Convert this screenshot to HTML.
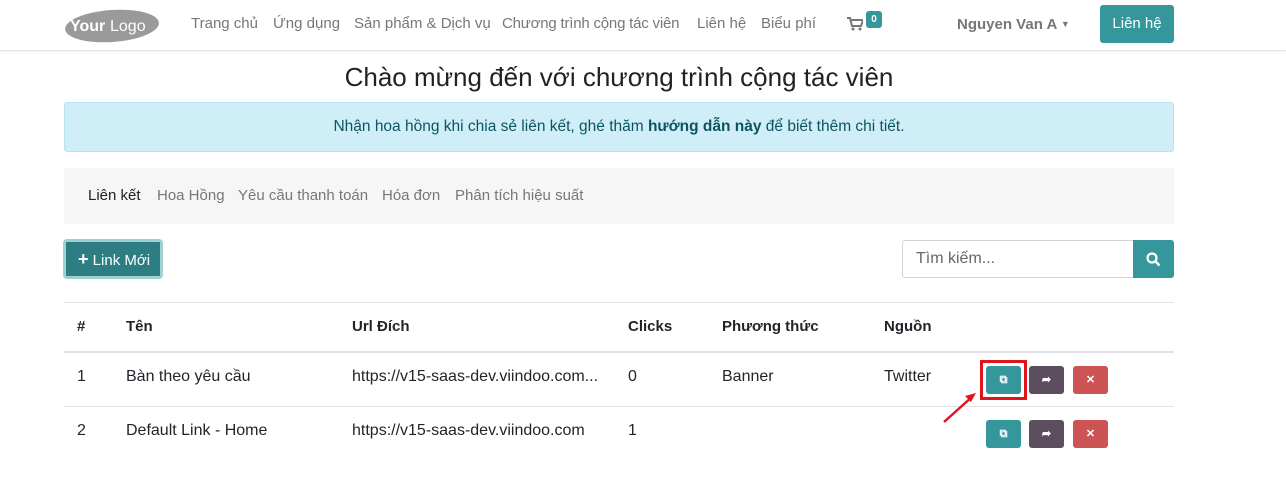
<!DOCTYPE html>
<html><head><meta charset="utf-8"><style>
*{box-sizing:border-box;margin:0;padding:0}
body{width:1286px;height:502px;background:#fff;font-family:"Liberation Sans",sans-serif;color:#212529;position:relative;overflow:hidden}
.a{position:absolute;white-space:nowrap}
.hdr{position:absolute;left:0;top:0;width:1286px;height:51px;border-bottom:1px solid #e5e5e5;box-shadow:0 1px 3px rgba(0,0,0,.06)}
.nav{color:#777;font-size:15px;top:15px}
.btn{position:absolute;width:35px;height:28px;border-radius:3px;color:#fff;font-size:11px;text-align:center;line-height:28px;font-weight:bold}
.t{background:#35979c}.p{background:#5d4e5f}.r{background:#cd5454}
.line{position:absolute;left:64px;width:1110px;height:1px;background:#dee2e6}
.th{font-weight:bold;font-size:15px;top:318px}
.td{font-size:16px}
</style></head><body>
<div class="hdr"></div>
<svg class="a" style="left:64px;top:8px" width="96" height="36"><ellipse cx="48" cy="18" rx="47" ry="16" fill="#9a9a9a" transform="rotate(-4 48 18)"/><text x="6" y="23" font-family="Liberation Sans" font-weight="bold" font-size="16" fill="#fff">Your</text><text x="46" y="23" font-family="Liberation Sans" font-size="16" fill="#fff">Logo</text></svg>
<div class="a nav" style="left:191px">Trang chủ</div>
<div class="a nav" style="left:273px">Ứng dụng</div>
<div class="a nav" style="left:354px">Sản phẩm &amp; Dịch vụ</div>
<div class="a nav" style="left:502px;letter-spacing:-0.2px">Chương trình cộng tác viên</div>
<div class="a nav" style="left:697px">Liên hệ</div>
<div class="a nav" style="left:761px">Biểu phí</div>
<svg class="a" style="left:847px;top:17px" width="16" height="14"><path d="M0 1h3l2 8h9l2-6H4" fill="none" stroke="#777" stroke-width="2"/><circle cx="6" cy="12" r="1.5" fill="#777"/><circle cx="13" cy="12" r="1.5" fill="#777"/></svg>
<div class="a" style="left:866px;top:11px;width:16px;height:17px;background:#35979c;border-radius:3px;color:#fff;font-size:10px;font-weight:bold;text-align:center;line-height:17px">0</div>
<div class="a" style="left:957px;top:16px;font-size:15px;font-weight:bold;color:#777">Nguyen Van A <span style="font-size:9px;position:relative;top:-2px">▼</span></div>
<div class="a" style="left:1100px;top:5px;width:74px;height:38px;background:#35979c;border-radius:3px;color:#fff;font-size:15px;text-align:center;line-height:38px">Liên hệ</div>
<div class="a" style="left:64px;width:1110px;text-align:center;top:62px;font-size:26px;color:#222">Chào mừng đến với chương trình cộng tác viên</div>
<div class="a" style="left:64px;top:102px;width:1110px;height:50px;background:#cfeef8;border:1px solid #b8e3f2;border-radius:3px;color:#0c5460;font-size:15.5px;text-align:center;line-height:48px">Nhận hoa hồng khi chia sẻ liên kết, ghé thăm <b>hướng dẫn này</b> để biết thêm chi tiết.</div>
<div class="a" style="left:64px;top:168px;width:1110px;height:56px;background:#f6f6f6"></div>
<div class="a" style="left:88px;top:187px;font-size:15px;color:#222">Liên kết</div>
<div class="a" style="left:157px;top:187px;font-size:15px;color:#777">Hoa Hồng</div>
<div class="a" style="left:238px;top:187px;font-size:15px;color:#777">Yêu cầu thanh toán</div>
<div class="a" style="left:382px;top:187px;font-size:15px;color:#777">Hóa đơn</div>
<div class="a" style="left:455px;top:187px;font-size:15px;color:#777">Phân tích hiệu suất</div>
<div class="a" style="left:63px;top:239px;width:100px;height:40px;background:#2c7e82;border:3px solid #9fd1d3;border-radius:4px;color:#fff;font-size:15px;line-height:34px;padding-left:12px"><b style="font-size:18px">+</b> Link Mới</div>
<div class="a" style="left:902px;top:240px;width:232px;height:38px;border:1px solid #ced4da;border-radius:3px 0 0 3px;font-size:16px;color:#666;line-height:36px;padding-left:13px">Tìm kiếm...</div>
<div class="a" style="left:1133px;top:240px;width:41px;height:38px;background:#35979c;border-radius:0 3px 3px 0"><svg style="position:absolute;left:13px;top:12px" width="15" height="15"><circle cx="6" cy="6" r="4.5" fill="none" stroke="#fff" stroke-width="2.2"/><path d="M9.5 9.5l4 4" stroke="#fff" stroke-width="2.5"/></svg></div>
<div class="line" style="top:302px"></div>
<div class="line" style="top:351px;height:2px"></div>
<div class="line" style="top:406px"></div>
<div class="a th" style="left:77px">#</div>
<div class="a th" style="left:126px">Tên</div>
<div class="a th" style="left:352px">Url Đích</div>
<div class="a th" style="left:628px">Clicks</div>
<div class="a th" style="left:722px">Phương thức</div>
<div class="a th" style="left:884px">Nguồn</div>
<div class="a td" style="left:77px;top:368px">1</div>
<div class="a td" style="left:126px;top:368px">Bàn theo yêu cầu</div>
<div class="a td" style="left:352px;top:368px">https://v15-saas-dev.viindoo.com...</div>
<div class="a td" style="left:628px;top:368px">0</div>
<div class="a td" style="left:722px;top:368px">Banner</div>
<div class="a td" style="left:884px;top:368px">Twitter</div>
<div class="a td" style="left:77px;top:422px">2</div>
<div class="a td" style="left:126px;top:422px">Default Link - Home</div>
<div class="a td" style="left:352px;top:422px">https://v15-saas-dev.viindoo.com</div>
<div class="a td" style="left:628px;top:422px">1</div>
<div class="btn t" style="left:986px;top:366px">⧉</div>
<div class="btn p" style="left:1029px;top:366px">➦</div>
<div class="btn r" style="left:1073px;top:366px">✕</div>
<div class="btn t" style="left:986px;top:420px">⧉</div>
<div class="btn p" style="left:1029px;top:420px">➦</div>
<div class="btn r" style="left:1073px;top:420px">✕</div>
<div class="a" style="left:980px;top:360px;width:47px;height:40px;border:3px solid #e0141c"></div>
<svg class="a" style="left:940px;top:390px" width="40" height="35"><path d="M4 32L33 6" stroke="#e0141c" stroke-width="2.5"/><path d="M36 3l-11 3 6 6z" fill="#e0141c"/></svg>
</body></html>
